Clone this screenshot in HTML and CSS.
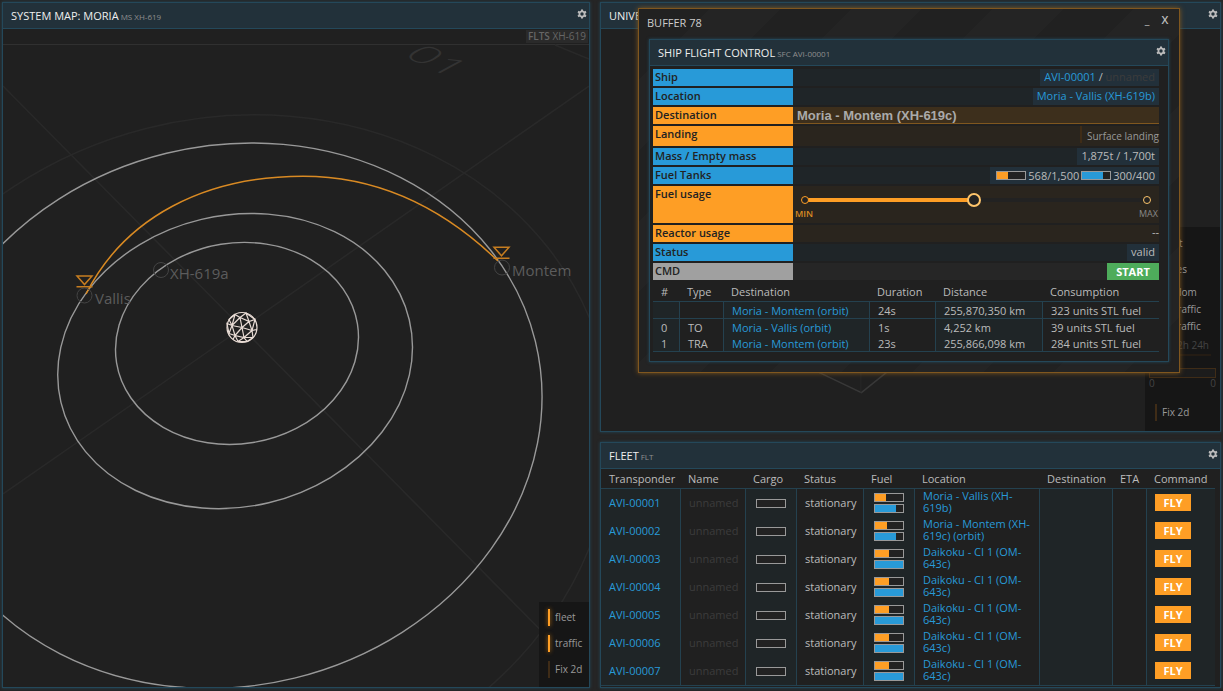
FILE: index.html
```html
<!DOCTYPE html>
<html lang="en">
<head>
<meta charset="utf-8">
<title>System Map: Moria</title>
<link rel="stylesheet" href="styles.css">
</head>
<body>
<svg class="defs" aria-hidden="true">
  <symbol id="gear" viewBox="0 0 10 10">
    <circle cx="5" cy="5" r="2.6" fill="none" stroke="#bbb" stroke-width="1.8"/>
    <path d="M5 .4v1.8M5 7.800v1.800M1 2.700l1.600.9M7.400 6.400l1.600.9M1 7.300l1.600-.9M7.400 3.600l1.600-.9" stroke="#bbb" stroke-width="2"/>
  </symbol>
</svg>
<main class="desk">
  <section class="panel panel-map">
    <header class="bar"><h2>System map: Moria</h2><small>MS XH-619</small>
      <button class="gear" aria-label="Settings"><svg><use href="#gear"/></svg></button></header>
    <nav class="context"><a href="#flts"><b>FLTS</b> XH-619</a></nav>
    <div class="canvas">
      <svg class="map" viewBox="3 45 586 642" preserveAspectRatio="xMinYMin slice">
        <g class="grid">
          <path d="M3 86L242 328L589 679M3 494L242 328L589 86M555 45L589 59"/>
          <ellipse rx="386" ry="336" transform="translate(229 454) rotate(-14.3)"/>
        </g>
        <text class="sector" transform="matrix(1.4 .65 -1.05 .57 402 55.6)">01</text>
        <g class="orbit">
          <ellipse rx="122" ry="100.400" transform="translate(237 343.4) rotate(-9.2)"/>
          <ellipse rx="179" ry="145.600" transform="translate(235.1 361.1) rotate(-13.35)"/>
          <ellipse rx="313.800" ry="270.100" transform="translate(230.5 415.7) rotate(-13.7)"/>
        </g>
        <path class="route" d="M86 294C125 217 205 176.300 303 176.300C375 176.300 440 205 498 261"/>
        <g class="marker">
          <path d="M77 276h15l-7.500 8.500zM76.500 286.700h16"/>
          <path d="M494 247.300h15l-7.500 8.500zM493.500 258.300h16"/>
        </g>
        <g class="planet">
          <circle cx="84.500" cy="295.500" r="7.500"/><circle cx="161" cy="270" r="7.500"/><circle cx="502" cy="267.500" r="7.500"/>
        </g>
        <g class="names"><text x="95" y="304">Vallis</text><text x="170" y="279">XH-619a</text><text x="512" y="276">Montem</text></g>
        <g class="star" transform="translate(242 327.500)">
          <circle r="15"/>
          <path d="M0 0L-2-10L7-6L10 3L2 10L-7 8L-10-2L-2-10M0 0L7-6M0 0L10 3M0 0L2 10M0 0L-7 8M0 0L-10-2M-2-10L-7-13L-10-2L-15-4L-13 6L-10-2M-2-10L4-14.500L7-6L13-8L10 3L15 2M10 3L11 10L2 10L5 14L-4 14L-7 8L-13 6M-7 8L-9 12M-7-13L-13-8L-10-2M4-14.500L13-8M11 10L5 14M2 10L-4 14"/>
        </g>
      </svg>
      <div class="options">
        <label><input type="checkbox" class="switch" checked>fleet</label>
        <label><input type="checkbox" class="switch" checked>traffic</label>
        <label><input type="checkbox" class="switch">Fix 2d</label>
      </div>
    </div>
  </section>

  <section class="panel panel-universe">
    <header class="bar"><h2>Universe map</h2>
      <button class="gear" aria-label="Settings"><svg><use href="#gear"/></svg></button></header>
    <div class="canvas">
      <svg class="map" viewBox="602 29 618 402" preserveAspectRatio="xMinYMin slice">
        <path d="M818 371L862 392L888 371" fill="none" stroke="#383838" stroke-width="1.500"/>
        <path d="M861.500 360v32" stroke="#282828"/>
      </svg>
      <div class="options options-wide">
        <label><input type="checkbox" class="switch">fleet</label>
        <label><input type="checkbox" class="switch">gates</label>
        <p class="o-dom">Freedom</p>
        <p>STL traffic</p>
        <p>FTL traffic</p>
        <p class="o-span">6h 12h 24h</p>
        <div class="meter"></div>
        <div class="scale"><span>0</span><span>0</span></div>
        <label><input type="checkbox" class="switch">Fix 2d</label>
      </div>
    </div>
  </section>

  <section class="panel panel-fleet">
    <header class="bar"><h2>Fleet</h2><small>FLT</small>
      <button class="gear" aria-label="Settings"><svg><use href="#gear"/></svg></button></header>
    <table class="fleet">
      <colgroup><col class="c1"><col class="c2"><col class="c3"><col class="c4"><col class="c5"><col class="c6"><col class="c7"><col class="c8"><col class="c9"></colgroup>
      <thead><tr><th>Transponder</th><th>Name</th><th>Cargo</th><th>Status</th><th>Fuel</th><th>Location</th><th>Destination</th><th>ETA</th><th>Command</th></tr></thead>
      <tbody id="ships"></tbody>
    </table>
  </section>
</main>

<section class="window">
  <header class="win-head"><h1>Buffer 78</h1><button aria-label="Minimize">_</button><button aria-label="Close">x</button></header>
  <div class="panel panel-sfc">
    <header class="bar"><h2>Ship flight control</h2><small>SFC AVI-00001</small>
      <button class="gear" aria-label="Settings"><svg><use href="#gear"/></svg></button></header>
    <form class="form">
      <div class="row"><span class="key">Ship</span><div class="val"><output class="tag"><a href="#ship">AVI-00001</a> / <i>unnamed</i></output></div></div>
      <div class="row"><span class="key">Location</span><div class="val"><output class="tag"><a href="#loc">Moria - Vallis (XH-619b)</a></output></div></div>
      <div class="row edit"><label class="key" for="dest">Destination</label><div class="val"><input id="dest" class="dest" value="Moria - Montem (XH-619c)"></div></div>
      <div class="row edit landing"><label class="key" for="land">Landing</label><div class="val"><input id="land" type="checkbox" class="switch"><label for="land" class="small">Surface landing</label></div></div>
      <div class="row"><span class="key">Mass / Empty mass</span><div class="val"><output class="tag">1,875t / 1,700t</output></div></div>
      <div class="row"><span class="key">Fuel Tanks</span><div class="val"><output class="tag tanks"><span class="gauge stl"><b style="width:38%"></b></span>568/1,500<span class="gauge ftl"><b style="width:75%"></b></span>300/400</output></div></div>
      <div class="row edit usage"><label class="key" for="fuel">Fuel usage</label><div class="val"><div class="slider"><input id="fuel" type="range" min="0" max="1000" value="494"><span class="dot"></span><span class="dot end"></span></div><div class="marks"><span>MIN</span><span>MAX</span></div></div></div>
      <div class="row edit"><span class="key">Reactor usage</span><div class="val"><output class="dash">--</output></div></div>
      <div class="row"><span class="key">Status</span><div class="val"><output class="tag">valid</output></div></div>
      <div class="row cmd"><span class="key">CMD</span><div class="val"><button type="button" class="start">START</button></div></div>
    </form>
    <table class="plan">
      <colgroup><col class="p1"><col class="p2"><col class="p3"><col class="p4"><col class="p5"><col class="p6"></colgroup>
      <thead><tr><th>#</th><th>Type</th><th>Destination</th><th>Duration</th><th>Distance</th><th>Consumption</th></tr></thead>
      <tbody>
        <tr class="sum"><td></td><td></td><td><a href="#m">Moria - Montem (orbit)</a></td><td>24s</td><td>255,870,350 km</td><td>323 units STL fuel</td></tr>
        <tr><td>0</td><td>TO</td><td><a href="#v">Moria - Vallis (orbit)</a></td><td>1s</td><td>4,252 km</td><td>39 units STL fuel</td></tr>
        <tr><td>1</td><td>TRA</td><td><a href="#m">Moria - Montem (orbit)</a></td><td>23s</td><td>255,866,098 km</td><td>284 units STL fuel</td></tr>
      </tbody>
    </table>
  </div>
</section>
<script src="app.js"></script>
</body>
</html>
```
FILE: styles.css
```css
* { box-sizing: border-box; }
html, body { height: 100%; }
body {
  margin: 0;
  background: #252525;
  color: #bbb;
  font: 11px/17px "Open Sans", "Noto Sans", sans-serif;
  overflow: hidden;
}
h1, h2, p { margin: 0; font-weight: 400; }
a { color: #289ad8; text-decoration: none; }
button { font: inherit; color: inherit; border: 0; padding: 0; background: none; cursor: pointer; }
.defs { position: absolute; width: 0; height: 0; }

.desk {
  display: grid;
  height: 100%;
  padding: 2px 2px 3px;
  gap: 10px;
  grid-template-columns: 588fr 621fr;
  grid-template-rows: 430fr 246fr;
}
.panel {
  display: flex;
  flex-direction: column;
  min-width: 0;
  min-height: 0;
  background: #202020;
  border: 1px solid #24485a;
  box-shadow: 0 0 3px #24485a;
}
.desk .panel { overflow: hidden; }
.panel-map { grid-row: 1 / 3; }
.bar {
  display: flex;
  flex: none;
  align-items: center;
  height: 26px;
  padding: 0 2px 0 8px;
  gap: 2px;
  background: #22313a;
  border-bottom: 1px solid #24485a;
}
.bar h2 { color: #eee; font-size: 11px; text-transform: uppercase; white-space: nowrap; }
.bar small { color: #8f8f8f; font-size: 8px; padding-top: 2px; white-space: nowrap; }
.gear { display: flex; margin: 0 0 4px auto; }
.gear svg { width: 10px; height: 10px; }

.context { display: flex; flex: none; justify-content: flex-end; height: 16px; padding: 1px; border-bottom: 1px solid #303030; }
.context a { padding: 0 2px; background: #2a2a2a; color: #666; font-size: 10px; line-height: 13px; }
.context b { font-weight: 600; }
.canvas { position: relative; flex: 1; min-height: 0; }
.map { display: block; width: 100%; height: 100%; overflow: visible; }
.grid { fill: none; stroke: #292929; stroke-width: 1.5; }
.sector { fill: #333; font-size: 30px; font-weight: 300; }
.orbit { fill: none; stroke: #999; stroke-width: 1.4; }
.route { fill: none; stroke: #d98a23; stroke-width: 1.5; }
.marker { fill: none; stroke: #c67d20; stroke-width: 1.5; }
.planet { fill: none; stroke: #444; }
.names { fill: #5c5c5c; font-size: 15px; }
.star { fill: none; stroke: #e9dcd5; stroke-width: 1.2; }

.options {
  position: absolute;
  right: 0;
  bottom: 0;
  display: flex;
  flex-direction: column;
  gap: 9px;
  width: 50px;
  padding: 7px 0 9px 9px;
  background: #161616;
  color: #999;
  font-size: 10px;
  line-height: 17px;
  white-space: nowrap;
}
.options label { display: flex; align-items: center; }
.switch { appearance: none; flex: none; width: 2px; height: 17px; margin: 0 5px 0 0; background: #3f2c17; }
.switch:checked { background: #fe9e25; box-shadow: 0 0 4px #c47410; }
.options-wide { width: 75px; height: 204px; padding: 8px 4px 9px; gap: 0; }
.options-wide label { margin: 0 0 9px 6px; }
.options-wide .o-dom { margin-top: -3px; }
.options-wide p { padding-left: 6px; }
.options-wide .o-span { margin: 2px 5px 12px 0; padding: 0 2px 0 0; color: #444; border-bottom: 2px solid #241c14; text-align: right; }
.options-wide .meter { flex: none; height: 10px; border: 1px solid #3f2c17; background: #1c1c1c; }
.scale { display: flex; justify-content: space-between; margin: -3px 0 12px; color: #444; }

table { border-collapse: separate; border-spacing: 0; table-layout: fixed; width: 100%; }
th { text-align: left; font-weight: 400; color: #bbb; padding: 0 0 0 8px; border-bottom: 1px solid #24414f; }
th + th { padding-left: 7px; }
td { padding: 0 0 0 8px; border-right: 1px solid #24414f; white-space: nowrap; }
td:last-child { border-right: 0; }
td:nth-child(odd) { background: #1f2527; }

.fleet { width: calc(100% - 6px); border-bottom: 1px solid #24414f; }
.fleet th { height: 20px; }
.fleet td { height: 28px; padding-bottom: 1px; }
.fleet .loc { display: block; padding-bottom: 2px; line-height: 12px; white-space: normal; }
.fleet i, .tag i { font-style: normal; color: #3c3c3c; }
.fleet td:nth-child(3) { padding: 0 0 0 10px; }
.fleet td:nth-child(5) { padding: 2px 0 0 10px; }
.fleet td:nth-child(5) .gauge { margin: 0 0 2px; }
.c1 { width: 80px; } .c2 { width: 65px; } .c3 { width: 51px; } .c4 { width: 67px; } .c5 { width: 51px; }
.c6 { width: 125px; } .c7 { width: 73px; } .c8 { width: 34px; } .c9 { width: 68px; }
.gauge { display: block; width: 30px; height: 9px; border: 1px solid #999; background: #222; }
.gauge b { display: block; height: 100%; }
.stl b { background: #fe9e25; }
.ftl b { background: #289ad8; }
.fly { display: block; width: 36px; height: 17px; background: #fe9e25; color: #fff; font-weight: 700; line-height: 17px; }

.window {
  position: absolute;
  top: 8px;
  right: 43px;
  width: 542px;
  padding: 0 10px 10px;
  border: 1px solid #80571f;
  box-shadow: 0 0 5px #80571f;
  background: repeating-linear-gradient(135deg, #212121 0 50px, #242424 50px 100px);
}
.win-head { display: flex; align-items: center; height: 30px; padding: 0 0 4px; gap: 10px; }
.win-head h1 { flex: 1; margin-left: -2px; font-size: 11px; text-transform: uppercase; color: #ccc; }
.win-head button { width: 8px; padding-bottom: 6px; font-weight: 600; text-transform: uppercase; }
.panel-sfc { padding-bottom: 9px; }
.form { display: grid; gap: 2px; margin: 3px 9px 0 3px; line-height: 15px; }
.row { display: grid; grid-template-columns: 140px 1fr; min-height: 17px; }
.key { padding-left: 2px; background: #289ad8; color: #222; font-weight: 600; }
.val { display: flex; justify-content: flex-end; min-width: 0; background: #1f2528; }
.tag { padding: 0 4px; background: #22303a; }
.edit .key { background: #fe9e25; }
.edit .val { background: #2a251e; }
.landing { min-height: 20px; }
.small { font-size: 10px; line-height: 20px; color: #999; }
.dest { width: 100%; height: 17px; padding: 0 4px; border: 0; border-bottom: 1px solid #80571f; background: #3d2f1c; color: #aaa; font: bold 13px/16px "Liberation Sans", sans-serif; }
.tanks { display: flex; align-items: center; gap: 2px; padding-left: 6px; }
.usage { min-height: 37px; }
.usage .val { display: block; padding: 6px 5px 0; }
.slider { position: relative; height: 16px; }
.slider input { appearance: none; display: block; width: 100%; height: 16px; margin: 0; background: linear-gradient(90deg, #fe9e25 50%, #222 50%) 7px 50% / calc(100% - 14px) 4px no-repeat; }
.slider input::-webkit-slider-thumb { appearance: none; width: 14px; height: 14px; border: 2px solid #fdc46b; border-radius: 50%; background: #222; }
.dot { position: absolute; left: 3px; top: 4px; width: 8px; height: 8px; border: 1px solid #fe9e25; border-radius: 50%; background: #222; pointer-events: none; }
.dot.end { left: auto; right: 3px; border-color: #fdc46b; }
.marks { display: flex; justify-content: space-between; margin: 0 -4px 0 -3px; font-size: 9px; line-height: 12px; color: #888; }
.marks span:first-child { color: #d98a23; font-weight: 600; }
.dash { line-height: 13px; }
.cmd .key { background: #a0a0a0; }
.cmd .val { background: #262626; }
.start { width: 52px; height: 17px; background: #4eac5b; color: #fff; font-weight: 700; }

.plan { width: auto; margin: 2px 9px 0 3px; border-bottom: 1px solid #24414f; }
.plan th { height: 20px; }
.plan td { height: 16px; line-height: 15px; }
.plan .sum td { height: 17px; border-bottom: 1px solid #24414f; }
.p1 { width: 27px; } .p2 { width: 44px; } .p3 { width: 146px; } .p4 { width: 66px; } .p5 { width: 107px; } .p6 { width: 116px; }
```
FILE: app.js
```js
const ships = [
  ['AVI-00001', 'Moria - Vallis (XH-619b)', 40, 75],
  ['AVI-00002', 'Moria - Montem (XH-619c) (orbit)', 44, 75],
  ['AVI-00003', 'Daikoku - CI 1 (OM-643c)', 50, 100],
  ['AVI-00004', 'Daikoku - CI 1 (OM-643c)', 50, 100],
  ['AVI-00005', 'Daikoku - CI 1 (OM-643c)', 50, 100],
  ['AVI-00006', 'Daikoku - CI 1 (OM-643c)', 50, 100],
  ['AVI-00007', 'Daikoku - CI 1 (OM-643c)', 50, 100],
];
document.getElementById('ships').innerHTML = ships.map(([id, loc, stl, ftl]) => `
<tr>
  <td><a href="#${id}">${id}</a></td><td><i>unnamed</i></td>
  <td><span class="gauge"></span></td><td>stationary</td>
  <td><span class="gauge stl"><b style="width:${stl}%"></b></span><span class="gauge ftl"><b style="width:${ftl}%"></b></span></td>
  <td><a class="loc" href="#loc">${loc}</a></td><td></td><td></td>
  <td><button class="fly">FLY</button></td>
</tr>`).join('');
```
